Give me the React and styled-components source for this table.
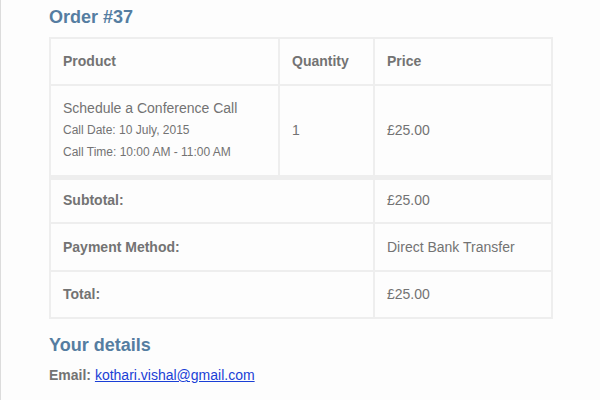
import styled, { createGlobalStyle } from "styled-components";

const GlobalStyle = createGlobalStyle`
  html, body {
    margin: 0;
    padding: 0;
    background: #fdfdfd;
  }
  body {
    font-family: "Liberation Sans", Arial, sans-serif;
    color: #737373;
  }
`;

const items = [
  {
    name: "Schedule a Conference Call",
    meta: ["Call Date: 10 July, 2015", "Call Time: 10:00 AM - 11:00 AM"],
    quantity: 1,
    price: "£25.00"
  }
];

const totals = [
  { label: "Subtotal:", value: "£25.00", lh: 20 },
  { label: "Payment Method:", value: "Direct Bank Transfer", lh: 22 },
  { label: "Total:", value: "£25.00", lh: 21 }
];

const App = () => {
  return (
    <>
      <GlobalStyle />
      <Page>
        <Heading>Order #37</Heading>
        <OrderTable>
          <colgroup>
            <col style={{ width: 229 }} />
            <col style={{ width: 95 }} />
            <col />
          </colgroup>
          <thead>
            <tr>
              <HeadCell>Product</HeadCell>
              <HeadCell>Quantity</HeadCell>
              <HeadCell>Price</HeadCell>
            </tr>
          </thead>
          <tbody>
            {items.map((item) => (
              <tr key={item.name}>
                <Cell>
                  <ProductName>{item.name}</ProductName>
                  {item.meta.map((line) => (
                    <MetaLine key={line}>{line}</MetaLine>
                  ))}
                </Cell>
                <Cell>{item.quantity}</Cell>
                <Cell>{item.price}</Cell>
              </tr>
            ))}
          </tbody>
          <tfoot>
            {totals.map((row, i) => (
              <tr key={row.label}>
                <FootLabel colSpan={2} $first={i === 0} $lh={row.lh}>
                  {row.label}
                </FootLabel>
                <FootCell $first={i === 0} $lh={row.lh}>
                  {row.value}
                </FootCell>
              </tr>
            ))}
          </tfoot>
        </OrderTable>

        <Heading $spaced>Your details</Heading>
        <DetailLine>
          <strong>Email:</strong>{" "}
          <EmailLink href="mailto:kothari.vishal@gmail.com">kothari.vishal@gmail.com</EmailLink>
        </DetailLine>
      </Page>
    </>
  );
};

const Page = styled.div`
  min-height: 400px;
  box-sizing: border-box;
  border-left: 1px solid #dcdcdc;
  padding: 6px 0 0 48px;
`;

const Heading = styled.h2`
  margin: ${({ $spaced }) => ($spaced ? "15px 0 9px" : "0 0 9px")};
  font-size: 18px;
  line-height: 22px;
  font-weight: 700;
  color: #557da1;
`;

const OrderTable = styled.table`
  width: 504px;
  border-collapse: separate;
  border-spacing: 0;
  border: 1px solid #eee;
  font-size: 14px;
  color: #737373;
`;

const Cell = styled.td`
  border: 1px solid #eee;
  padding: 12px;
  text-align: left;
  vertical-align: middle;
  line-height: 21px;
`;

const HeadCell = styled.th`
  border: 1px solid #eee;
  padding: 12px;
  text-align: left;
  line-height: 21px;
  font-weight: 700;
`;

const FootCell = styled(Cell)`
  border-top-width: ${({ $first }) => ($first ? "4px" : "1px")};
  padding-top: ${({ $first }) => ($first ? "10px" : "12px")};
  line-height: ${({ $lh }) => $lh}px;
`;

const FootLabel = styled(HeadCell)`
  border-top-width: ${({ $first }) => ($first ? "4px" : "1px")};
  padding-top: ${({ $first }) => ($first ? "10px" : "12px")};
  line-height: ${({ $lh }) => $lh}px;
`;

const ProductName = styled.div`
  line-height: 21px;
`;

const MetaLine = styled.div`
  font-size: 12px;
  line-height: 22px;
`;

const DetailLine = styled.p`
  margin: 0;
  font-size: 14px;
  line-height: 20px;
`;

const EmailLink = styled.a`
  color: #1a3fd6;
  text-decoration: underline;
`;

export default App;
